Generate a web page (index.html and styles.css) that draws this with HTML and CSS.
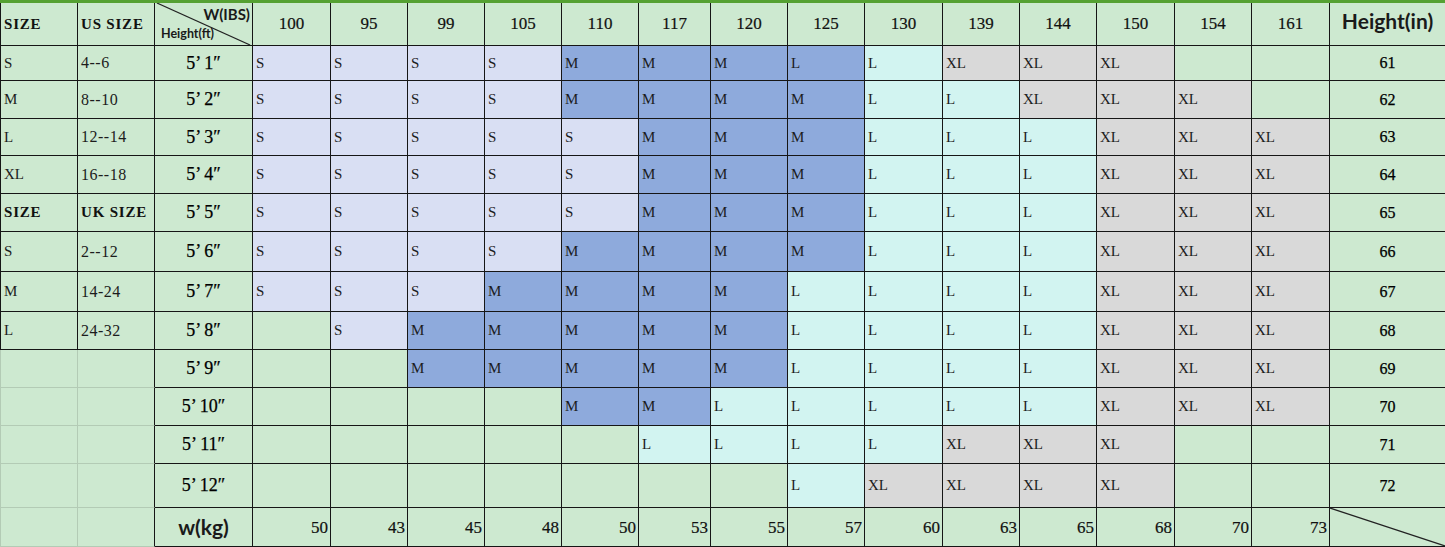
FILE: index.html
```html
<!DOCTYPE html>
<html>
<head>
<meta charset="utf-8">
<title>Size chart</title>
<link rel="stylesheet" href="styles.css">
</head>
<body>
<div class="sheet">
  <!-- header -->
  <div class="c g lb first">SIZE</div>
  <div class="c g lb">US SIZE</div>
  <div class="c g corner">
    <svg class="slash" viewBox="0 0 100 100" preserveAspectRatio="none"><line x1="2" y1="0" x2="98" y2="100" stroke="#222" stroke-width="1.2" vector-effect="non-scaling-stroke"/></svg>
    <span class="wibs">W(IBS)</span>
    <span class="hft">Height(ft)</span>
  </div>
  <div class="c g hd">100</div><div class="c g hd">95</div><div class="c g hd">99</div><div class="c g hd">105</div><div class="c g hd">110</div><div class="c g hd">117</div><div class="c g hd">120</div><div class="c g hd">125</div><div class="c g hd">130</div><div class="c g hd">139</div><div class="c g hd">144</div><div class="c g hd">150</div><div class="c g hd">154</div><div class="c g hd">161</div>
  <div class="c g hin e">Height(in)</div>

  <!-- 5'1 -->
  <div class="c g lt first">S</div><div class="c g ln">4--6</div><div class="c g ht">5&#8217; 1&#8243;</div>
  <div class="c lv lt">S</div><div class="c lv lt">S</div><div class="c lv lt">S</div><div class="c lv lt">S</div><div class="c bl lt">M</div><div class="c bl lt">M</div><div class="c bl lt">M</div><div class="c bl lt">L</div><div class="c cy lt">L</div><div class="c gy lt">XL</div><div class="c gy lt">XL</div><div class="c gy lt">XL</div><div class="c g"></div><div class="c g"></div>
  <div class="c g in e">61</div>

  <!-- 5'2 -->
  <div class="c g lt first">M</div><div class="c g ln">8--10</div><div class="c g ht">5&#8217; 2&#8243;</div>
  <div class="c lv lt">S</div><div class="c lv lt">S</div><div class="c lv lt">S</div><div class="c lv lt">S</div><div class="c bl lt">M</div><div class="c bl lt">M</div><div class="c bl lt">M</div><div class="c bl lt">M</div><div class="c cy lt">L</div><div class="c cy lt">L</div><div class="c gy lt">XL</div><div class="c gy lt">XL</div><div class="c gy lt">XL</div><div class="c g"></div>
  <div class="c g in e">62</div>

  <!-- 5'3 -->
  <div class="c g lt first">L</div><div class="c g ln">12--14</div><div class="c g ht">5&#8217; 3&#8243;</div>
  <div class="c lv lt">S</div><div class="c lv lt">S</div><div class="c lv lt">S</div><div class="c lv lt">S</div><div class="c lv lt">S</div><div class="c bl lt">M</div><div class="c bl lt">M</div><div class="c bl lt">M</div><div class="c cy lt">L</div><div class="c cy lt">L</div><div class="c cy lt">L</div><div class="c gy lt">XL</div><div class="c gy lt">XL</div><div class="c gy lt">XL</div>
  <div class="c g in e">63</div>

  <!-- 5'4 -->
  <div class="c g lt first">XL</div><div class="c g ln">16--18</div><div class="c g ht">5&#8217; 4&#8243;</div>
  <div class="c lv lt">S</div><div class="c lv lt">S</div><div class="c lv lt">S</div><div class="c lv lt">S</div><div class="c lv lt">S</div><div class="c bl lt">M</div><div class="c bl lt">M</div><div class="c bl lt">M</div><div class="c cy lt">L</div><div class="c cy lt">L</div><div class="c cy lt">L</div><div class="c gy lt">XL</div><div class="c gy lt">XL</div><div class="c gy lt">XL</div>
  <div class="c g in e">64</div>

  <!-- 5'5 -->
  <div class="c g lb first">SIZE</div><div class="c g lb">UK SIZE</div><div class="c g ht">5&#8217; 5&#8243;</div>
  <div class="c lv lt">S</div><div class="c lv lt">S</div><div class="c lv lt">S</div><div class="c lv lt">S</div><div class="c lv lt">S</div><div class="c bl lt">M</div><div class="c bl lt">M</div><div class="c bl lt">M</div><div class="c cy lt">L</div><div class="c cy lt">L</div><div class="c cy lt">L</div><div class="c gy lt">XL</div><div class="c gy lt">XL</div><div class="c gy lt">XL</div>
  <div class="c g in e">65</div>

  <!-- 5'6 -->
  <div class="c g lt first">S</div><div class="c g ln">2--12</div><div class="c g ht">5&#8217; 6&#8243;</div>
  <div class="c lv lt">S</div><div class="c lv lt">S</div><div class="c lv lt">S</div><div class="c lv lt">S</div><div class="c bl lt">M</div><div class="c bl lt">M</div><div class="c bl lt">M</div><div class="c bl lt">M</div><div class="c cy lt">L</div><div class="c cy lt">L</div><div class="c cy lt">L</div><div class="c gy lt">XL</div><div class="c gy lt">XL</div><div class="c gy lt">XL</div>
  <div class="c g in e">66</div>

  <!-- 5'7 -->
  <div class="c g lt first">M</div><div class="c g ln">14-24</div><div class="c g ht">5&#8217; 7&#8243;</div>
  <div class="c lv lt">S</div><div class="c lv lt">S</div><div class="c lv lt">S</div><div class="c bl lt">M</div><div class="c bl lt">M</div><div class="c bl lt">M</div><div class="c bl lt">M</div><div class="c cy lt">L</div><div class="c cy lt">L</div><div class="c cy lt">L</div><div class="c cy lt">L</div><div class="c gy lt">XL</div><div class="c gy lt">XL</div><div class="c gy lt">XL</div>
  <div class="c g in e">67</div>

  <!-- 5'8 -->
  <div class="c g lt first">L</div><div class="c g ln">24-32</div><div class="c g ht">5&#8217; 8&#8243;</div>
  <div class="c g"></div><div class="c lv lt">S</div><div class="c bl lt">M</div><div class="c bl lt">M</div><div class="c bl lt">M</div><div class="c bl lt">M</div><div class="c bl lt">M</div><div class="c cy lt">L</div><div class="c cy lt">L</div><div class="c cy lt">L</div><div class="c cy lt">L</div><div class="c gy lt">XL</div><div class="c gy lt">XL</div><div class="c gy lt">XL</div>
  <div class="c g in e">68</div>

  <!-- 5'9 -->
  <div class="c g fa first"></div><div class="c g fa k"></div><div class="c g ht">5&#8217; 9&#8243;</div>
  <div class="c g"></div><div class="c g"></div><div class="c bl lt">M</div><div class="c bl lt">M</div><div class="c bl lt">M</div><div class="c bl lt">M</div><div class="c bl lt">M</div><div class="c cy lt">L</div><div class="c cy lt">L</div><div class="c cy lt">L</div><div class="c cy lt">L</div><div class="c gy lt">XL</div><div class="c gy lt">XL</div><div class="c gy lt">XL</div>
  <div class="c g in e">69</div>

  <!-- 5'10 -->
  <div class="c g fa first"></div><div class="c g fa k"></div><div class="c g ht">5&#8217; 10&#8243;</div>
  <div class="c g"></div><div class="c g"></div><div class="c g"></div><div class="c g"></div><div class="c bl lt">M</div><div class="c bl lt">M</div><div class="c cy lt">L</div><div class="c cy lt">L</div><div class="c cy lt">L</div><div class="c cy lt">L</div><div class="c cy lt">L</div><div class="c gy lt">XL</div><div class="c gy lt">XL</div><div class="c gy lt">XL</div>
  <div class="c g in e">70</div>

  <!-- 5'11 -->
  <div class="c g fa first"></div><div class="c g fa k"></div><div class="c g ht">5&#8217; 11&#8243;</div>
  <div class="c g"></div><div class="c g"></div><div class="c g"></div><div class="c g"></div><div class="c g"></div><div class="c cy lt">L</div><div class="c cy lt">L</div><div class="c cy lt">L</div><div class="c cy lt">L</div><div class="c gy lt">XL</div><div class="c gy lt">XL</div><div class="c gy lt">XL</div><div class="c g"></div><div class="c g"></div>
  <div class="c g in e">71</div>

  <!-- 5'12 -->
  <div class="c g fa first"></div><div class="c g fa k"></div><div class="c g ht">5&#8217; 12&#8243;</div>
  <div class="c g"></div><div class="c g"></div><div class="c g"></div><div class="c g"></div><div class="c g"></div><div class="c g"></div><div class="c g"></div><div class="c cy lt">L</div><div class="c gy lt">XL</div><div class="c gy lt">XL</div><div class="c gy lt">XL</div><div class="c gy lt">XL</div><div class="c g"></div><div class="c g"></div>
  <div class="c g in e">72</div>

  <!-- kg -->
  <div class="c g fa first"></div><div class="c g fa k"></div><div class="c g wkg">w(kg)</div>
  <div class="c g kg">50</div><div class="c g kg">43</div><div class="c g kg">45</div><div class="c g kg">48</div><div class="c g kg">50</div><div class="c g kg">53</div><div class="c g kg">55</div><div class="c g kg">57</div><div class="c g kg">60</div><div class="c g kg">63</div><div class="c g kg">65</div><div class="c g kg">68</div><div class="c g kg">70</div><div class="c g kg">73</div>
  <div class="c g e endcell">
    <svg class="slash" viewBox="0 0 100 100" preserveAspectRatio="none"><line x1="0" y1="0" x2="100" y2="100" stroke="#222" stroke-width="1.2" vector-effect="non-scaling-stroke"/></svg>
  </div>
</div>
</body>
</html>
```

FILE: styles.css
```css
html, body {
  margin: 0;
  padding: 0;
  background: #ffffff;
  overflow: hidden;
}

body {
  font-family: "Liberation Serif", "Times New Roman", serif;
  color: #111;
}

.sheet {
  display: grid;
  width: 1445px;
  grid-template-columns: 78px 77px 98px 78px 77px 77px 77px 77px 72px 77px 77px 78px 77px 77px 78px 77px 78px 115px;
  grid-template-rows: 43px 35px 38px 37px 38px 38px 40px 40px 38px 38px 38px 38px 44px 39px;
  border-top: 3px solid #55a133;
}

.c {
  box-sizing: border-box;
  position: relative;
  display: flex;
  align-items: center;
  overflow: hidden;
  white-space: nowrap;
  border-right: 1px solid #161616;
  border-bottom: 1px solid #161616;
}

.first { border-left: 1px solid #161616; }
.e { border-right: none; }

/* fills */
.g  { background: #cde9d0; }
.lv { background: #d9dff3; }
.bl { background: #8eaadc; }
.cy { background: #d2f4f1; }
.gy { background: #d9d9d9; }

/* faint spreadsheet grid in the empty left area */
.fa {
  border-right-color: #b3cbb5;
  border-bottom-color: #b3cbb5;
}
.fa.first { border-left-color: #b3cbb5; }
.fa.k { border-right-color: #161616; }

/* size letters */
.lt {
  justify-content: flex-start;
  padding-left: 3px;
  font-family: "Liberation Serif", "Times New Roman", serif;
  font-size: 15px;
  color: #1c1c1c;
}

.lb {
  justify-content: flex-start;
  padding-left: 3px;
  font-family: "Liberation Serif", "Times New Roman", serif;
  font-size: 15px;
  font-weight: bold;
  letter-spacing: 0.8px;
  color: #111;
}

.ln {
  justify-content: flex-start;
  padding-left: 3px;
  font-size: 16px;
  letter-spacing: 0.5px;
  color: #1c1c1c;
}

.hd {
  justify-content: center;
  font-size: 17px;
  color: #111;
  -webkit-text-stroke: 0.2px #111;
}

.ht {
  justify-content: center;
  font-family: "Liberation Serif", "Times New Roman", serif;
  font-size: 18px;
  color: #000;
  -webkit-text-stroke: 0.25px #000;
}

.in {
  justify-content: center;
  font-family: "Liberation Serif", "Times New Roman", serif;
  font-size: 16px;
  color: #000;
  -webkit-text-stroke: 0.25px #000;
}

.kg {
  justify-content: flex-end;
  padding-right: 2px;
  padding-top: 2px;
  font-size: 17px;
  color: #111;
  -webkit-text-stroke: 0.2px #111;
}

.hin {
  justify-content: center;
  align-items: flex-start;
  padding-top: 5px;
  font-family: Lato, "Liberation Sans", sans-serif;
  font-weight: bold;
  font-size: 21px;
  color: #1a1a1a;
}

.wkg {
  justify-content: center;
  padding-bottom: 2px;
  font-family: Lato, "Liberation Sans", sans-serif;
  font-weight: bold;
  font-size: 21px;
  color: #1a1a1a;
}

.corner {
  flex-direction: column;
  align-items: stretch;
  justify-content: space-between;
  padding: 3px 2px 4px 6px;
  font-family: Lato, "Liberation Sans", sans-serif;
  font-weight: bold;
  color: #1a1a1a;
}

.wibs {
  align-self: flex-end;
  font-size: 15px;
  line-height: 16px;
  position: relative;
}

.hft {
  align-self: flex-start;
  font-size: 12.5px;
  line-height: 14px;
  position: relative;
}

.slash {
  position: absolute;
  left: 0;
  top: 0;
  width: 100%;
  height: 100%;
}
```
